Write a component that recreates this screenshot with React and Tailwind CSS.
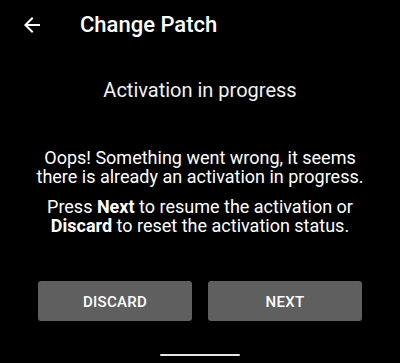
import React from 'react';

function BackArrow() {
  return (
    <svg width="24" height="24" viewBox="0 0 24 24" fill="currentColor">
      <path d="M20 11H7.83l5.59-5.59L12 4l-8 8 8 8 1.41-1.41L7.83 13H20v-2z" />
    </svg>
  );
}

export default function App() {
  return (
    <div className="w-[400px] h-[363px] bg-black text-white flex flex-col font-['Roboto',sans-serif] overflow-hidden">
      <div className="flex items-center h-[24px] mt-[13px]">
        <button className="ml-[20px] text-white">
          <BackArrow />
        </button>
        <h1 className="ml-[36px] text-[22px] leading-[24px] font-medium">Change Patch</h1>
      </div>

      <p className="mt-[41px] text-center text-[20px] leading-[24px] text-[#f2f2f2]">Activation in progress</p>

      <div className="mt-[46px] px-[34px] text-center text-[18px] leading-[19px]">
        <p>Oops! Something went wrong, it seems there is already an activation in progress.</p>
        <p className="mt-[11px]">
          Press <b className="font-bold">Next</b> to resume the activation or <b className="font-bold">Discard</b> to reset the activation status.
        </p>
      </div>

      <div className="mt-[46px] flex justify-center gap-[16px]">
        <button className="w-[154px] h-[40px] pt-[3px] rounded-[3px] bg-[#5f5f5f] text-[15px] font-medium tracking-[0.3px] text-white">DISCARD</button>
        <button className="w-[154px] h-[40px] pt-[3px] rounded-[3px] bg-[#5f5f5f] text-[15px] font-medium tracking-[0.3px] text-white">NEXT</button>
      </div>

      <div className="mt-auto mb-[7px] mx-auto w-[80px] h-[2px] rounded-full bg-[#e6e6e6]" />
    </div>
  );
}
